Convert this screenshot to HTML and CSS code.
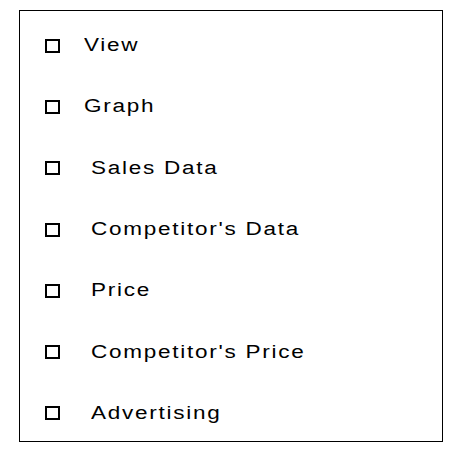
FILE: index.html
```html
<!DOCTYPE html>
<html lang="en">
<head>
  <meta charset="UTF-8">
  <meta name="viewport" content="width=device-width, initial-scale=1.0">
  <title>Options</title>
  <link rel="stylesheet" href="styles.css">
</head>
<body>
  <div id="panel">
    <ul class="options">
      <li class="option"><span class="check"></span><span class="label">View</span></li>
      <li class="option"><span class="check"></span><span class="label">Graph</span></li>
      <li class="option"><span class="check"></span><span class="label label-sub">Sales Data</span></li>
      <li class="option"><span class="check"></span><span class="label label-sub">Competitor's Data</span></li>
      <li class="option"><span class="check"></span><span class="label label-sub">Price</span></li>
      <li class="option"><span class="check"></span><span class="label label-sub">Competitor's Price</span></li>
      <li class="option"><span class="check"></span><span class="label label-sub">Advertising</span></li>
    </ul>
  </div>
</body>
</html>
```

FILE: styles.css
```css
body {
  margin: 0;
  padding: 10px 0 0 19px;
  background: #fff;
  font-family: "Liberation Sans", Arial, sans-serif;
  color: #000;
}

#panel {
  width: 422px;
  height: 430px;
  border: 1px solid #000;
}

.options {
  list-style: none;
  margin: 0;
  padding: 4px 0 0 25px;
}

.option {
  display: flex;
  align-items: center;
  height: 61.3px;
}

.check {
  width: 11px;
  height: 10px;
  border: 2px solid #000;
  flex-shrink: 0;
}

/* the old bitmap font is wider than Arial, so stretch it */
.label {
  display: inline-block;
  margin-left: 24px;
  font-size: 18px;
  letter-spacing: 1.4px;
  white-space: nowrap;
  transform: scaleX(1.25);
  transform-origin: left center;
}

.label-sub {
  margin-left: 31px;
}
```
